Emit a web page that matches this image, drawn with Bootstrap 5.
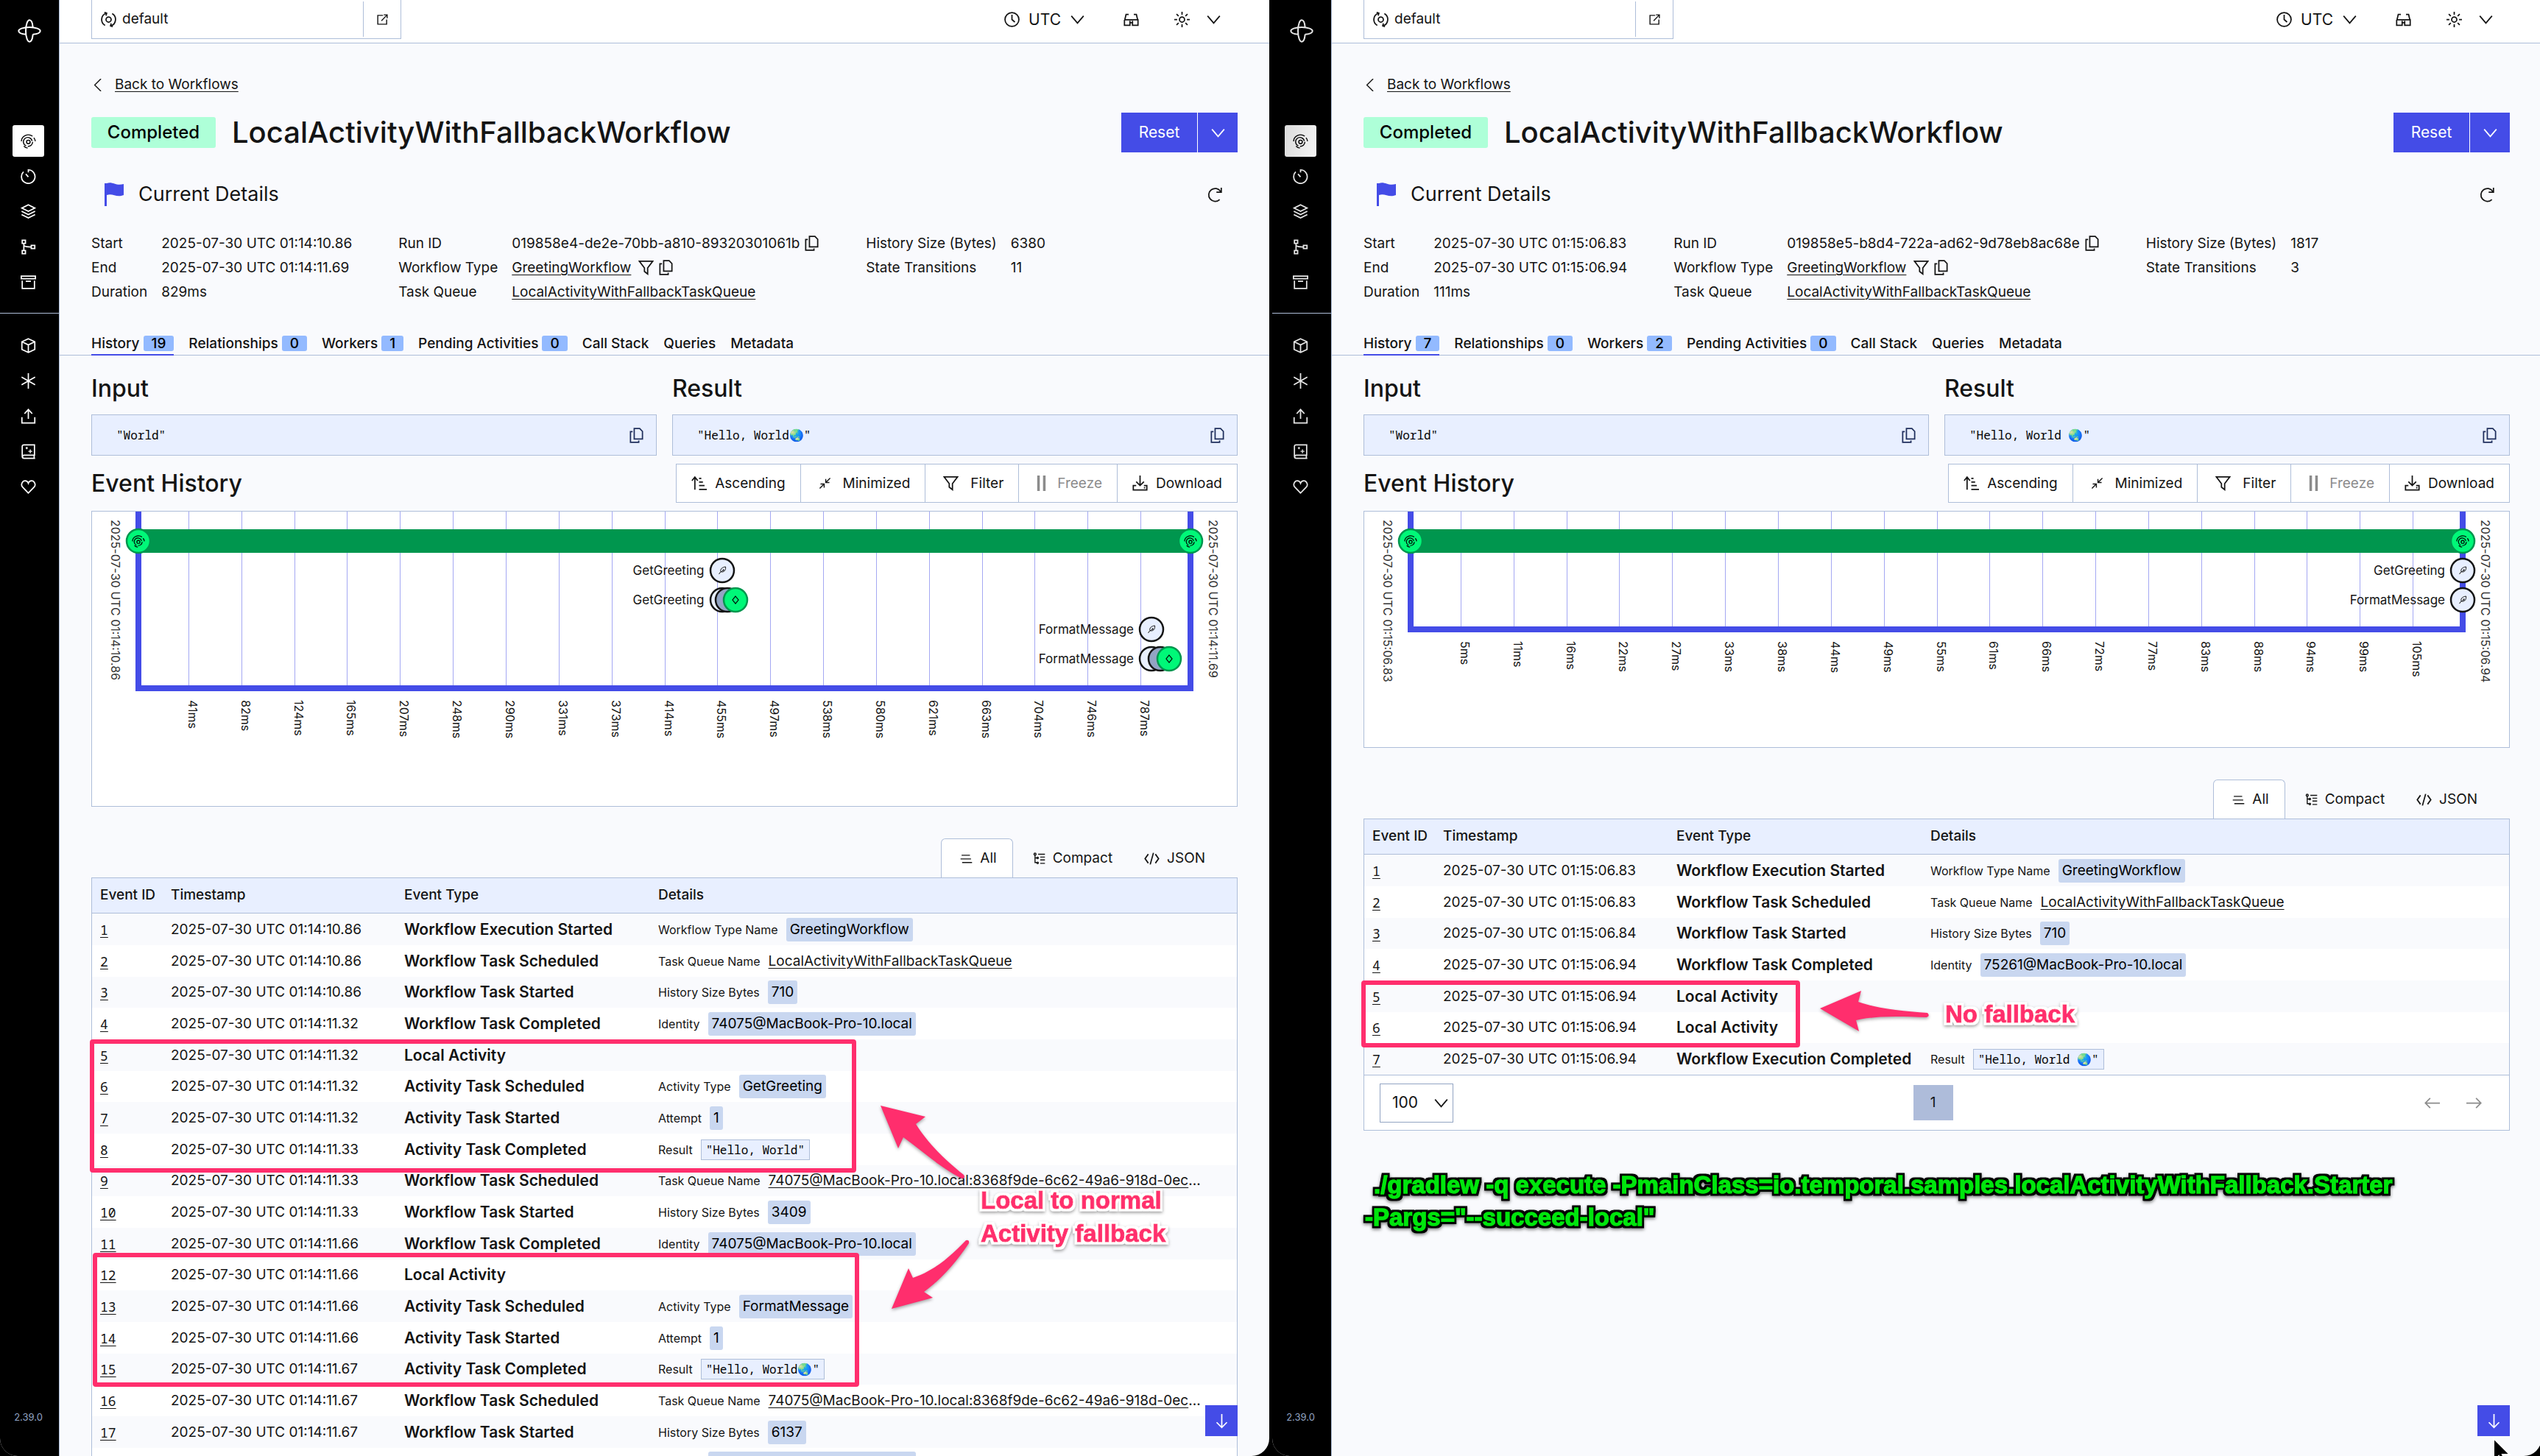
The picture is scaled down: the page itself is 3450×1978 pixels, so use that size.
<!DOCTYPE html>
<html lang="en">
<head>
<meta charset="utf-8">
<meta name="viewport" content="width=device-width, initial-scale=1">
<title>LocalActivityWithFallbackWorkflow</title>
<link href="https://cdn.jsdelivr.net/npm/bootstrap@5.3.0/dist/css/bootstrap.min.css" rel="stylesheet">
<style>
  :root {
    --ink: #141414;
    --line: #aebed9;
    --brand: #444ce7;
    --page: #f9fafd;
    --tint: #e8efff;
    --pink: #ff2e6d;
    --mono: "Noto Sans Mono", "Liberation Mono", monospace;
  }
  body {
    font-family: Inter, sans-serif;
    font-size: 19px;
    line-height: 28px;
    color: var(--ink);
    background: #000;
  }
  button { color: inherit; }
  a { color: inherit; text-underline-offset: 3px; text-decoration-thickness: 1px; }
  .ico { width: 21px; height: 21px; fill: none; stroke: currentColor; stroke-width: 2; flex: none; display: block; }
  .ico-sm { width: 17px; height: 17px; }

  .stage { gap: 4px; margin-right: -2px; }
  .pane { overflow: hidden; border-radius: 0 0 24px 24px; flex: 1 1 0; min-width: 0; background: var(--page); }

  .rail { width: 81px; background: #000; color: #fff; border-right: 1px solid var(--line); padding: 26px 0 38px; }
  .pane + .pane .rail { color: #e6e6e6; }
  .rail-logo { width: 32px; height: 32px; margin-bottom: 112px; }
  .rail-links { gap: 5px; padding-right: 3px; }
  .rail-link { width: 43px; height: 43px; display: flex; align-items: center; justify-content: center; border-radius: 3px; color: inherit; }
  .rail-link.active { background: #fff; color: #000; }
  .pane + .pane .rail-link.active { background: linear-gradient(100deg, #dcdcdc, #f4f4f4); }
  .rail-rule { height: 1px; background: var(--line); width: 100%; margin: 20px 0 22px; }
  .rail-version { font-size: 13px; line-height: 30px; color: #92a4c3; padding-right: 3px; }

  .topbar { height: 59px; background: #fff; border-bottom: 1px solid var(--line); padding: 0 65px 0 43px; }
  .ns-box { width: 421px; height: 53px; border: 1px solid var(--line); border-top: 0; background: #fff; }
  .ns-box input { border: 0; background: none; outline: 0; color: inherit; width: 300px; height: 36px; line-height: 36px; padding: 0; }
  .ns-open { width: 51px; height: 48px; border: 0; border-left: 1px solid var(--line); background: none; }
  .top-tools { height: 53px; gap: 52px; }
  .top-btn { border: 0; background: none; padding: 0; font-size: 21px; gap: 12px; }
  .top-theme { gap: 22px; margin-left: -4px; }

  .px-page { padding-left: 43px; padding-right: 43px; }
  .back-row { padding-top: 42px; gap: 15px; }
  .title-row { margin-top: 24px; gap: 22px; }
  .status { background: #aeffd8; border-radius: 3px; font-size: 24px; font-weight: 500; line-height: 42px; width: 169px; text-align: center; color: #000; }
  .wf-title { font-size: 40px; font-weight: 500; line-height: 54px; margin: 0; }
  .reset-btn { background: var(--brand); color: #fff; border: 0; height: 54px; font-size: 21px; }
  .reset-main { width: 103px; }
  .reset-more { width: 55px; border-left: 1px solid #fff; }
  .now-row { margin-top: 41px; height: 32px; font-size: 27px; padding: 0 20px 0 18px; gap: 20px; }
  .facts { margin-top: 34px; gap: 63px; }
  .fact-grid { display: grid; grid-template-columns: auto auto; column-gap: 19px; grid-auto-rows: 33px; align-items: center; align-content: start; margin: 0; }
  .fact-grid dt, .fact-grid dd { font-weight: 400; margin: 0; white-space: nowrap; }
  .fact-grid dd { display: flex; align-items: center; gap: 6px; }

  .tabs { margin-top: 43px; border-bottom: 1px solid var(--line); gap: 20px; font-weight: 500; height: 27px; }
  .tabs a { text-decoration: none; display: flex; gap: 5px; line-height: 21px; height: 27px; white-space: nowrap; }
  .tabs a.active { box-shadow: inset 0 -2px 0 var(--brand); }
  .tab-count { background: #93baff; color: #000; border-radius: 3px; padding: 0 11px; height: 21px; }

  .h-sect { font-size: 32px; font-weight: 500; line-height: 40px; margin: 0; }
  .io-row { margin-top: 25px; gap: 21px; }
  .io-box { margin-top: 15px; height: 56px; background: var(--tint); border: 1px solid var(--line); padding: 0 16px 0 33px; color: #1f2f5c; }
  .io-box code { font: 16px/24px var(--mono); color: #000; }
  .hist-row { margin-top: 11px; }
  .tool { height: 53px; background: #fff; border: 1px solid var(--line); border-left-width: 0; padding: 0 20px; display: flex; align-items: center; gap: 11px; }
  .tool:first-child { border-left-width: 1px; }
  .tool:disabled { color: #8c8c8c; }

  .chart { margin-top: 11px; background: #fff; border: 1px solid var(--line); position: relative; padding: 0 59px; }
  .plot { position: relative; }
  .axis { position: absolute; inset: 0; border: 8px solid var(--brand); border-top: 0; }
  .gridline { position: absolute; top: 0; bottom: 0; width: 1px; background: #a4a8f3; }
  .tick { position: absolute; writing-mode: vertical-rl; font-size: 16px; line-height: 16px; white-space: nowrap; margin: 12px 0 0 -2px; top: 100%; }
  .stamp { position: absolute; top: 11px; writing-mode: vertical-rl; font-size: 16px; line-height: 20px; white-space: nowrap; color: #333; }
  .stamp-l { left: 22px; }
  .stamp-r { right: 22px; }
  .lane { position: absolute; left: 4px; right: 4px; height: 32px; }
  .lane-bar { background: #00964e; height: 32px; }
  .node { position: absolute; top: -2px; width: 36px; height: 36px; margin-left: -18px; }
  .lane-name { position: absolute; top: 0; line-height: 32px; font-size: 17px; margin-right: 24px; white-space: nowrap; }

  .views { margin-top: 43px; padding-right: 43px; gap: 26px; }
  .views button { border: 1px solid transparent; border-bottom: 0; background: none; height: 53px; padding: 0; display: flex; align-items: center; gap: 10px; }
  .views button.active { background: #fff; border-color: var(--line); border-radius: 6px 6px 0 0; padding: 0 21px 0 25px; }
  .views button + button + button { margin-left: 15px; }

  .ev-wrap { border: 1px solid var(--line); background: #fff; }
  .ev-table { table-layout: fixed; border-collapse: separate; border-spacing: 0; --bs-table-bg: #fff; --bs-table-striped-bg: #f9fafd; --bs-table-color: var(--ink); --bs-table-striped-color: var(--ink); color: var(--ink); margin: 0; }
  .ev-table > thead > tr > th { background: var(--tint); border-bottom: 1px solid var(--line); font-weight: 500; height: 48px; padding: 0 11px 2px; vertical-align: middle; }
  .ev-table > tbody > tr > td { border: 0; padding: 0 0 0 11px; vertical-align: middle; white-space: nowrap; }
  .ev-table > tbody > tr { height: 43px; }
  .ev-table > tbody > tr:nth-child(3n) { height: 42px; }
  .ev-id { font-family: var(--mono); font-size: 18px; }
  .ev-type { font-size: 21px; font-weight: 600; }
  .ev-info { display: flex; align-items: center; gap: 11px; height: 32px; }
  .ev-key { font-size: 16px; }
  .chip { background: #c9d7f0; border-radius: 3px; line-height: 32px; padding: 0 5px; color: #000; }
  .ev-info code { font: 16px/26px var(--mono); color: #000; background: var(--tint); border: 1px solid var(--line); padding: 0 6px; }

  .pager { height: 75px; border-top: 1px solid var(--line); padding: 0 21px; }
  .size-box { position: relative; }
  .size-box select { width: 100px; height: 53px; border: 1px solid #92a4c3; border-radius: 0; font-size: 21px; padding: 0 16px; background: #fff; color: var(--ink); appearance: none; }
  .size-box svg { position: absolute; right: 6px; top: 16px; pointer-events: none; }
  .page-no { width: 54px; height: 48px; background: #aebcda; border: 0; }
  .page-step { width: 53px; height: 48px; background: none; border: 0; display: flex; align-items: center; justify-content: center; }
  .page-step:disabled { color: #8c8c8c; }

  .to-end { position: absolute; right: 43px; bottom: 27px; width: 44px; height: 42px; background: var(--brand); color: #fff; border: 0; display: flex; align-items: center; justify-content: center; }
  .notes { position: absolute; left: 0; top: 0; width: 100%; height: 100%; overflow: visible; pointer-events: none; font: bold 33px "Liberation Sans", Arial, sans-serif; }
  .note-fill { fill: var(--pink); filter: drop-shadow(0 2px 2px rgba(0,0,0,.35)); }
  .note-box { fill: none; stroke: var(--pink); stroke-width: 6; stroke-linejoin: round; }
  .note-pink { fill: var(--pink); stroke: var(--pink); stroke-width: 1; filter: url(#halo-white); }
  .note-green { fill: #00e60a; stroke: #00e60a; stroke-width: 1; filter: url(#halo-black); }
</style>
<script src="https://cdn.jsdelivr.net/npm/bootstrap@5.3.0/dist/js/bootstrap.bundle.min.js"></script>
</head>
<body class="vh-100 overflow-hidden">

<svg class="position-absolute" width="0" height="0" xmlns="http://www.w3.org/2000/svg">
  <filter id="halo-white" x="-5%" y="-30%" width="110%" height="170%">
    <feMorphology in="SourceAlpha" operator="dilate" radius="3" result="fat"/>
    <feFlood flood-color="#fff"/><feComposite in2="fat" operator="in" result="rim"/>
    <feDropShadow in="rim" dx="0" dy="2" stdDeviation="2" flood-opacity=".4" result="base"/>
    <feMerge><feMergeNode in="base"/><feMergeNode in="SourceGraphic"/></feMerge>
  </filter>
  <filter id="halo-black" x="-5%" y="-30%" width="110%" height="170%">
    <feMorphology in="SourceAlpha" operator="dilate" radius="3" result="fat"/>
    <feFlood flood-color="#000"/><feComposite in2="fat" operator="in" result="rim"/>
    <feDropShadow in="rim" dx="0" dy="2" stdDeviation="2" flood-opacity=".5" result="base"/>
    <feMerge><feMergeNode in="base"/><feMergeNode in="SourceGraphic"/></feMerge>
  </filter>
  <symbol id="i-logo" viewBox="0 0 32 32"><path d="M20.7 11.3C20.2 5 18.4 1.3 16 1.3S11 7 11 16s2.600 14.700 5 14.700 4.200-3.700 4.700-10M20.700 20.700c6.300-.5 10-2.300 10-4.700S25 11 16 11 1.300 13.600 1.300 16s3.700 4.200 10 4.700"/></symbol>
  <symbol id="i-flow" viewBox="0 0 24 24"><g stroke-width="1.600"><circle cx="12" cy="13.500" r="2.800"/><path d="M1.200 12.500A10.800 10 0 0 1 18.500 4.600M20.500 7a10 10 0 0 1 2.300 5.500M8.500 19.600a6.800 6.800 0 1 1 9.300-7.600M18.700 13.500a6.800 6.800 0 0 1-7.500 6.800M5 20a9.500 9.500 0 0 0 6 3"/></g></symbol>
  <symbol id="i-timer" viewBox="0 0 24 24"><path d="M12 6V2a10.500 10.500 0 1 1-7.500 3M8 8.500l4 4.500"/></symbol>
  <symbol id="i-layers" viewBox="0 0 24 24"><path d="M12 1.500 22 6.500l-10 5-10-5zM1.500 11.500 12 16.700l10.500-5.200M1.500 16.500 12 21.700l10.500-5.200"/></symbol>
  <symbol id="i-nodes" viewBox="0 0 24 24"><path d="M2.500 1.500h5v5h-5zM2.500 17.500h5v5h-5zM16.500 9.500h5.500v5h-5.500zM5 6.500v11M5 10c3 2 6 2 11.500 2"/></symbol>
  <symbol id="i-box" viewBox="0 0 24 24"><path d="M1 2.500h22v4H1zM2.500 9.500v12h19v-12M8 10.500h8"/></symbol>
  <symbol id="i-cube" viewBox="0 0 24 24"><path d="m12 1.500 10 4.500v12l-10 4.500L2 18V6zM2 6l10 5 10-5M12 11v11"/></symbol>
  <symbol id="i-star" viewBox="0 0 24 24"><path d="M12 0v24M1.500 6l21 12M22.500 6l-21 12"/></symbol>
  <symbol id="i-share" viewBox="0 0 24 24"><path d="M12 16V2M6 8l6-6.500L18 8M2 13.500V22.500h20v-9"/></symbol>
  <symbol id="i-book" viewBox="0 0 24 24"><path d="M22.500 22.500H5.500a3 3 0 0 1-3-3V4a2.500 2.500 0 0 1 2.500-2.500h16.500v16H5.500a2.500 2.500 0 0 0-2.500 2.500M21 17.500v5"/><path stroke-width="1.500" d="M15 8.500v6M12 11.500h6M9.500 4.800v3.400M7.800 6.500h3.400"/></symbol>
  <symbol id="i-heart" viewBox="0 0 24 24"><path d="M12 21.500 3 12.200C-.5 8 3 2.500 7 2.500c2.500 0 4.200 1.500 5 3.700.8-2.200 2.500-3.700 5-3.700 4 0 7.500 5.500 4 9.700z"/></symbol>
  <symbol id="i-ns" viewBox="0 0 24 24"><circle cx="12" cy="12" r="4"/><path d="M6.500 21.200A10.500 10.500 0 0 1 8 2.300M17.500 2.800A10.500 10.500 0 0 1 16 21.700M5.500 1l3.500 1.200-1 3.800M18.500 23 15 21.800l1-3.800"/></symbol>
  <symbol id="i-open" viewBox="0 0 24 24"><path d="M13 4H3v17h17V12M14.500 3H21v6.500M21 3 10 14.500"/></symbol>
  <symbol id="i-clock" viewBox="0 0 24 24"><circle cx="12" cy="12" r="10.800"/><path d="M12 4.500V12l4.500 4"/></symbol>
  <symbol id="i-down" viewBox="0 0 24 24"><path d="m2.500 6.500 9.500 11 9.500-11"/></symbol>
  <symbol id="i-left" viewBox="0 0 24 24"><path d="M18.500 0 6.500 12l12 12"/></symbol>
  <symbol id="i-specs" viewBox="0 0 24 24"><path d="M1.500 12.500h21v8.500h-8.500v-7M1.500 12.500V21h8.500v-7M10 17h4M2 12.500 4 4h4M22 12.500 20 4h-4"/></symbol>
  <symbol id="i-sun" viewBox="0 0 24 24"><circle cx="12" cy="12" r="4"/><path d="M12 0v4.500M12 19.500V24M0 12h4.500M19.500 12H24M3.500 3.500l3.200 3.200M17.300 17.300l3.200 3.200M20.500 3.500l-3.200 3.200M6.700 17.300l-3.200 3.200"/></symbol>
  <symbol id="i-flag" viewBox="0 0 26 32"><path fill="currentColor" stroke="none" d="M0 1h3v31H0zM3 1c8-3 12 4 23 1v15c-10 4-15-3-23 0z"/></symbol>
  <symbol id="i-reload" viewBox="0 0 24 24"><path d="M19 19.500A10 10 0 1 1 20.500 7M21.500 1v7H14"/></symbol>
  <symbol id="i-copy" viewBox="0 0 21 24"><path d="M7 1.200h8.500l4.300 4.500V17.500H7zM4.500 6H1.200v16.800H14V20"/></symbol>
  <symbol id="i-filter" viewBox="0 0 24 24"><path d="M1.500 2h21L14.500 12.500v9.500L9.500 18v-5.500z"/></symbol>
  <symbol id="i-asc" viewBox="0 0 24 24"><path d="M5.500 22V3M1 8l4.500-5.500L10 8M12 4.500h3.500M12 10h6M12 15.500h8.500M12 21.500h12"/></symbol>
  <symbol id="i-min" viewBox="0 0 24 24"><path d="M22 2 13.500 10.500M13.500 4v6.500h7M2 22l8.500-8.500M3.500 13.500h7v7"/></symbol>
  <symbol id="i-pause" viewBox="0 0 24 24"><path stroke-width="4" d="M7.500 0v24M16.500 0v24"/></symbol>
  <symbol id="i-save" viewBox="0 0 24 24"><path d="M12 0v15M6 9.500l6 6 6-6M6 15.500H1.500v7h21v-7H18M18 19h2"/></symbol>
  <symbol id="i-list" viewBox="0 0 24 24"><path d="M3 5.500h16M1 12.500h20M4 19.500h19"/></symbol>
  <symbol id="i-tree" viewBox="0 0 24 24"><path d="M4 4v15.500h5M4 10.500h5"/><circle cx="4" cy="3.500" r="2"/><circle cx="9" cy="10.500" r="1.500"/><circle cx="9" cy="20" r="1.500"/><path d="M10 3.500h13M14 9h9M14 14.500h9M14 21h9"/></symbol>
  <symbol id="i-code" viewBox="0 0 24 24"><path d="M6.500 5 1.500 12l5 7M17.500 5l5 7-5 7M14.500 3l-5 18"/></symbol>
  <symbol id="i-arr-d" viewBox="0 0 24 24"><path d="M12 1v21M4 14l8 8 8-8"/></symbol>
  <symbol id="i-arr-l" viewBox="0 0 24 24"><path d="M24 12H1.500M9 4.500 1.500 12 9 19.500"/></symbol>
  <symbol id="i-arr-r" viewBox="0 0 24 24"><path d="M0 12h22.500M15 4.500l7.500 7.500-7.500 7.500"/></symbol>
  <symbol id="i-feather" viewBox="0 0 24 24"><path d="M3 22 8 15M8 15C6 8 12 3 21 2c1 6-1 12-8 14zM8 16c4-1 7-4 8-8M12 12h6"/></symbol>
</svg>

<div class="stage d-flex h-100" id="stage"></div>

<script>
const ic = (n, c = '') => `<svg class="ico ${c}" aria-hidden="true"><use href="#i-${n}"/></svg>`;
const chip = v => `<span class="chip">${v}</span>`;
const code = v => `<code>${v}</code>`;
const link = v => `<a href="#">${v}</a>`;
const EXEC = 'Workflow Execution ', WT = 'Workflow Task ', AT = 'Activity Task ';
const QUEUE = 'LocalActivityWithFallbackTaskQueue';
const sticky = `<span>${link('74075@MacBook-Pro-10.local:8368f9de-6c62-49a6-918d-0ec')}...</span>`;

const runs = [
  {
    id: 'a', start: '01:14:10.86', end: '01:14:11.69', took: '829ms',
    run: '019858e4-de2e-70bb-a810-89320301061b', bytes: 6380, transitions: 11, events: 19, workers: 1,
    result: '"Hello, World🌏"',
    ticks: [41, 82, 124, 165, 207, 248, 290, 331, 373, 414, 455, 497, 538, 580, 621, 663, 704, 746, 787],
    lanes: [
      ['GetGreeting', [['local', 55.46]]],
      ['GetGreeting', [['open', 55.46], ['mid', 56], ['done', 56.76]]],
      ['FormatMessage', [['local', 96.29]]],
      ['FormatMessage', [['open', 96.29], ['mid', 97.1], ['done', 97.97]]]
    ],
    rows: [
      ['10.86', EXEC + 'Started', 'Workflow Type Name', chip('GreetingWorkflow')],
      ['10.86', WT + 'Scheduled', 'Task Queue Name', link(QUEUE)],
      ['10.86', WT + 'Started', 'History Size Bytes', chip(710)],
      ['11.32', WT + 'Completed', 'Identity', chip('74075@MacBook-Pro-10.local')],
      ['11.32', 'Local Activity'],
      ['11.32', AT + 'Scheduled', 'Activity Type', chip('GetGreeting')],
      ['11.32', AT + 'Started', 'Attempt', chip(1)],
      ['11.33', AT + 'Completed', 'Result', code('"Hello, World"')],
      ['11.33', WT + 'Scheduled', 'Task Queue Name', sticky],
      ['11.33', WT + 'Started', 'History Size Bytes', chip(3409)],
      ['11.66', WT + 'Completed', 'Identity', chip('74075@MacBook-Pro-10.local')],
      ['11.66', 'Local Activity'],
      ['11.66', AT + 'Scheduled', 'Activity Type', chip('FormatMessage')],
      ['11.66', AT + 'Started', 'Attempt', chip(1)],
      ['11.67', AT + 'Completed', 'Result', code('"Hello, World🌏"')],
      ['11.67', WT + 'Scheduled', 'Task Queue Name', sticky],
      ['11.67', WT + 'Started', 'History Size Bytes', chip(6137)],
      ['11.69', WT + 'Completed', 'Identity', chip('74075@MacBook-Pro-10.local')]
    ],
    clock: '01:14:',
    notes: `
      <rect class="note-box" x="125" y="1415" width="1035" height="175" rx="1"/>
      <rect class="note-box" x="129" y="1705" width="1035" height="176" rx="1"/>
      <path class="note-fill" d="M1196 1502 1257 1517 1244 1527C1262 1556 1287 1578 1309 1596Q1312 1601 1306 1601C1277 1586 1253 1564 1227 1545L1220 1560Z"/>
      <path class="note-fill" d="M1211 1778 1234 1723 1240 1736C1268 1727 1291 1707 1312 1685Q1317 1684 1316 1689C1300 1713 1279 1738 1255 1755L1267 1763Z"/>
      <text class="note-pink" x="1332" y="1642">Local to normal</text>
      <text class="note-pink" x="1332" y="1687">Activity fallback</text>`
  },
  {
    id: 'b', start: '01:15:06.83', end: '01:15:06.94', took: '111ms',
    run: '019858e5-b8d4-722a-ad62-9d78eb8ac68e', bytes: 1817, transitions: 3, events: 7, workers: 2,
    result: '"Hello, World 🌏"',
    ticks: [5, 11, 16, 22, 27, 33, 38, 44, 49, 55, 61, 66, 72, 77, 83, 88, 94, 99, 105],
    lanes: [['GetGreeting', [['local', 100]]], ['FormatMessage', [['local', 100]]]],
    rows: [
      ['06.83', EXEC + 'Started', 'Workflow Type Name', chip('GreetingWorkflow')],
      ['06.83', WT + 'Scheduled', 'Task Queue Name', link(QUEUE)],
      ['06.84', WT + 'Started', 'History Size Bytes', chip(710)],
      ['06.94', WT + 'Completed', 'Identity', chip('75261@MacBook-Pro-10.local')],
      ['06.94', 'Local Activity'],
      ['06.94', 'Local Activity'],
      ['06.94', EXEC + 'Completed', 'Result', code('"Hello, World 🌏"')]
    ],
    clock: '01:15:', paged: true,
    notes: `
      <rect class="note-box" x="124" y="1335" width="590" height="85" rx="1"/>
      <path class="note-fill" d="M744 1370 800 1346 796 1361C825 1371 858 1374 890 1376Q894 1380 889 1382C856 1381 824 1379 793 1386L797 1401Z"/>
      <text class="note-pink" x="914" y="1389">No fallback</text>
      <text class="note-green" x="138" y="1621">./gradlew -q execute -PmainClass=io.temporal.samples.localActivityWithFallback.Starter</text>
      <text class="note-green" x="126" y="1665">-Pargs="--succeed-local"</text>
      <path d="M1659 1954v30l7-6 5 12 5-2-5-12h10z" fill="#000" stroke="#fff" stroke-width="2"/>`
  }
];

const looks = {
  flow: ['#00f878', '#00964e', '<use href="#i-flow" x="9" y="9" width="18" height="18" stroke="#000"/>'],
  local: ['#e8efff', '#141414', '<use href="#i-feather" x="12" y="12" width="12" height="12" stroke="#141414" stroke-width="2"/>'],
  open: ['#e8efff', '#141414', ''],
  mid: ['#92a4c3', '#141414', ''],
  done: ['#00f878', '#00964e', '<path d="M18 13l4 5-4 5-4-5z" stroke="#000" stroke-width="1.200"/>']
};
const node = (kind, x) => {
  const [fill, edge, art] = looks[kind];
  return `<svg class="node" viewBox="0 0 36 36" fill="none" style="left:${x}%"><circle cx="18" cy="18" r="16" fill="${fill}" stroke="${edge}" stroke-width="2.500"/>${art}</svg>`;
};

const chart = r => {
  const h = (r.lanes.length + 1) * 40 + 44;
  return `<div class="chart" style="height:${h + 158}px">
    <span class="stamp stamp-l">2025-07-30 UTC ${r.start}</span>
    <span class="stamp stamp-r">2025-07-30 UTC ${r.end}</span>
    <div class="plot" style="height:${h}px">
      ${r.ticks.map((t, i) => `<i class="gridline" style="left:${(i + 1) * 5}%"></i><span class="tick" style="left:${(i + 1) * 5}%">${t}ms</span>`).join('')}
      <div class="axis"></div>
      <div class="lane" style="top:24px"><div class="lane-bar"></div>${node('flow', 0)}${node('flow', 100)}</div>
      ${r.lanes.map(([name, dots], i) => `<div class="lane" style="top:${64 + i * 40}px">
        <span class="lane-name" style="right:${(100 - dots[0][1]).toFixed(2)}%">${name}</span>${dots.map(d => node(...d)).join('')}</div>`).join('')}
    </div>
  </div>`;
};

const rail = `
  <nav class="rail d-flex flex-column align-items-center flex-shrink-0" aria-label="Main">
    <svg class="ico rail-logo" aria-hidden="true"><use href="#i-logo"/></svg>
    <div class="rail-links d-flex flex-column">
      ${['flow', 'timer', 'layers', 'nodes', 'box'].map((n, i) => `<a class="rail-link ${i ? '' : 'active'}" href="#" aria-label="${n}">${ic(n)}</a>`).join('')}
    </div>
    <div class="rail-rule"></div>
    <div class="rail-links d-flex flex-column">
      ${['cube', 'star', 'share', 'book', 'heart'].map(n => `<a class="rail-link" href="#" aria-label="${n}">${ic(n)}</a>`).join('')}
    </div>
    <div class="rail-version mt-auto">2.39.0</div>
  </nav>`;

const pane = r => `
<section class="pane d-flex position-relative">
  ${rail}
  <div class="flex-grow-1 overflow-hidden">
    <header class="topbar d-flex justify-content-between align-items-start">
      <div class="ns-box d-flex align-items-center justify-content-between">
        <label class="d-flex align-items-center ps-2 ms-1" for="ns-${r.id}">${ic('ns', 'me-2')}<span class="visually-hidden">Namespace</span>
          <input id="ns-${r.id}" type="text" value="default"></label>
        <button class="ns-open d-flex align-items-center justify-content-center" aria-label="Open namespace">${ic('open', 'ico-sm')}</button>
      </div>
      <div class="top-tools d-flex align-items-center">
        <button class="top-btn d-flex align-items-center">${ic('clock')}<span>UTC</span>${ic('down')}</button>
        <button class="top-btn" aria-label="Labs">${ic('specs')}</button>
        <button class="top-btn top-theme d-flex align-items-center" aria-label="Theme">${ic('sun')}${ic('down')}</button>
      </div>
    </header>

    <main>
      <div class="px-page">
        <div class="back-row d-flex align-items-center">${ic('left', 'ico-sm')}<a href="#">Back to Workflows</a></div>
        <div class="title-row d-flex align-items-center">
          <span class="status">Completed</span>
          <h1 class="wf-title">LocalActivityWithFallbackWorkflow</h1>
          <div class="ms-auto d-flex">
            <button class="reset-btn reset-main">Reset</button>
            <button class="reset-btn reset-more d-flex align-items-center justify-content-center" aria-label="More actions">${ic('down')}</button>
          </div>
        </div>
        <div class="now-row d-flex align-items-center">
          <svg width="26" height="32" color="#444ce7" aria-hidden="true"><use href="#i-flag"/></svg>
          <span>Current Details</span><span class="ms-auto">${ic('reload')}</span>
        </div>
        <div class="facts d-flex">
          <dl class="fact-grid">
            <dt>Start</dt><dd>2025-07-30 UTC ${r.start}</dd>
            <dt>End</dt><dd>2025-07-30 UTC ${r.end}</dd>
            <dt>Duration</dt><dd>${r.took}</dd>
          </dl>
          <dl class="fact-grid">
            <dt>Run ID</dt><dd>${r.run}${ic('copy')}</dd>
            <dt>Workflow Type</dt><dd>${link('GreetingWorkflow')}${ic('filter', 'ms-1')}${ic('copy')}</dd>
            <dt>Task Queue</dt><dd>${link(QUEUE)}</dd>
          </dl>
          <dl class="fact-grid">
            <dt>History Size (Bytes)</dt><dd>${r.bytes}</dd>
            <dt>State Transitions</dt><dd>${r.transitions}</dd>
          </dl>
        </div>
      </div>

      <nav class="tabs px-page d-flex" aria-label="Workflow">
        ${[['History', r.events], ['Relationships', 0], ['Workers', r.workers], ['Pending Activities', 0], ['Call Stack'], ['Queries'], ['Metadata']]
          .map(([t, n], i) => `<a href="#" class="${i ? '' : 'active'}">${t}${n === undefined ? '' : `<span class="tab-count">${n}</span>`}</a>`).join('')}
      </nav>

      <div class="px-page">
        <div class="io-row d-flex">
          ${[['Input', '"World"'], ['Result', r.result]].map(([t, v]) => `<div class="flex-fill w-50">
            <h2 class="h-sect">${t}</h2>
            <div class="io-box d-flex align-items-center justify-content-between"><code>${v}</code>${ic('copy')}</div></div>`).join('')}
        </div>
        <div class="hist-row d-flex align-items-center justify-content-between">
          <h2 class="h-sect">Event History</h2>
          <div class="d-flex">
            <button class="tool">${ic('asc')}Ascending</button>
            <button class="tool gap-3 ps-4">${ic('min', 'ico-sm')}Minimized</button>
            <button class="tool gap-3 ps-4">${ic('filter')}Filter</button>
            <button class="tool" disabled>${ic('pause')}Freeze</button>
            <button class="tool">${ic('save')}Download</button>
          </div>
        </div>
        ${chart(r)}
        <div class="views d-flex justify-content-end">
          <button class="active">${ic('list', 'ico-sm')}All</button>
          <button>${ic('tree', 'ico-sm')}Compact</button>
          <button>${ic('code')}JSON</button>
        </div>
        <div class="ev-wrap">
          <table class="table table-striped ev-table">
            <colgroup><col width="96"><col width="317"><col width="345"><col></colgroup>
            <thead><tr><th class="text-nowrap">Event ID</th><th>Timestamp</th><th>Event Type</th><th>Details</th></tr></thead>
            <tbody>${r.rows.map(([t, type, key, val], i) => `<tr>
              <td class="ev-id"><a href="#">${i + 1}</a></td><td>2025-07-30 UTC ${r.clock}${t}</td><td class="ev-type">${type}</td>
              <td>${key ? `<div class="ev-info"><span class="ev-key">${key}</span>${val}</div>` : ''}</td></tr>`).join('')}
            </tbody>
          </table>
          ${r.paged ? `<div class="pager d-flex align-items-center justify-content-between">
            <div class="size-box"><label class="visually-hidden" for="size-${r.id}">Per page</label>
              <select id="size-${r.id}"><option>100</option></select>${ic('down')}</div>
            <button class="page-no">1</button>
            <div class="d-flex gap-1"><button class="page-step" disabled aria-label="Previous">${ic('arr-l')}</button><button class="page-step" disabled aria-label="Next">${ic('arr-r')}</button></div>
          </div>` : ''}
        </div>
      </div>
    </main>
  </div>
  <button class="to-end" aria-label="Scroll to end">${ic('arr-d')}</button>
  <svg class="notes">${r.notes}</svg>
</section>`;

document.getElementById('stage').innerHTML = runs.map(pane).join('');
</script>
</body>
</html>
